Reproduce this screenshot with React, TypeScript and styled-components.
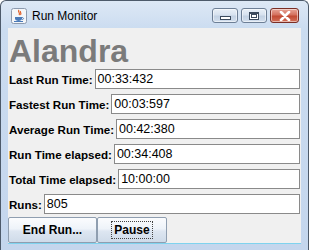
import React from "react";
import styled, { createGlobalStyle } from "styled-components";

const Global = createGlobalStyle`
  html, body { margin: 0; padding: 0; background: #ffffff; }
  * { box-sizing: border-box; }
`;

const Window = styled.div`
  width: 309px;
  height: 250px;
  border: 1px solid #4d5a6a;
  border-bottom: none;
  border-radius: 6px 6px 0 0;
  background: linear-gradient(180deg, #dde8f5 0px, #cbdcf0 28px, #c4d6ed 100%);
  display: flex;
  flex-direction: column;
  overflow: hidden;
  font-family: "Liberation Sans", Arial, sans-serif;
`;

const TitleBar = styled.div`
  height: 27px;
  display: flex;
  align-items: center;
  padding: 0 9px 0 10px;
  flex-shrink: 0;
`;

const AppIcon = styled.svg`
  width: 16px;
  height: 16px;
  margin-right: 5px;
  margin-top: 2px;
`;

const TitleText = styled.span`
  font-size: 12px;
  color: #000;
  flex: 1;
  margin-top: 2px;
  font-family: "Liberation Sans", Arial, sans-serif;
`;

const CaptionButtons = styled.div`
  display: flex;
  gap: 3px;
  align-items: center;
  margin-top: 2px;
`;

const CaptionBtn = styled.div<{ $close?: boolean }>`
  width: ${(p) => (p.$close ? "29px" : "26px")};
  height: 15px;
  border: 1px solid ${(p) => (p.$close ? "#7a2e25" : "#6d7f96")};
  border-radius: 3px;
  background: ${(p) =>
    p.$close
      ? "linear-gradient(180deg, #e8a598 0%, #d4715e 45%, #c24a33 55%, #d2705a 100%)"
      : "linear-gradient(180deg, #e9f0f8 0%, #d7e2ef 45%, #c3d2e4 55%, #d3dfee 100%)"};
  display: flex;
  align-items: center;
  justify-content: center;
  box-shadow: inset 0 0 0 1px rgba(255, 255, 255, 0.5);
`;

const MinGlyph = styled.div`
  width: 11px;
  height: 4px;
  border: 1px solid #3b4a5d;
  background: #fff;
  margin-top: 4px;
`;

const MaxGlyph = styled.div`
  width: 10px;
  height: 8px;
  border: 1px solid #3b4a5d;
  border-top-width: 2px;
  background: #fff;
  display: flex;
  align-items: center;
  justify-content: center;
  &::after {
    content: "";
    width: 4px;
    height: 2px;
    border: 1px solid #3b4a5d;
  }
`;

const Content = styled.div`
  margin: 0 7px 7px 7px;
  flex: 1;
  background: #f0f0f0;
  display: flex;
  flex-direction: column;
  padding: 0 1px 0 1px;
  box-shadow: 0 1px 0 #7fd3ee;
`;

const Heading = styled.div`
  height: 41px;
  padding-top: 5px;
  font-size: 32px;
  line-height: 36px;
  font-weight: bold;
  color: #7b7b7b;
  font-family: "Liberation Sans", Arial, sans-serif;
`;

const Rows = styled.div`
  display: flex;
  flex-direction: column;
  gap: 5px;
`;

const Row = styled.div`
  display: flex;
  align-items: center;
  height: 20px;
`;

const Label = styled.span`
  font-size: 11.6px;
  font-weight: bold;
  color: #000;
  white-space: nowrap;
  margin-right: 2px;
`;

const Field = styled.div`
  flex: 1;
  height: 20px;
  background: #fff;
  border: 1px solid #8a8a8a;
  font-size: 12.5px;
  line-height: 18px;
  padding-left: 2px;
  color: #000;
`;

const ButtonBar = styled.div`
  display: flex;
  margin-top: auto;
  margin-left: -1px;
  height: 26px;
`;

const Button = styled.div<{ $w: number; $focus?: boolean }>`
  width: ${(p) => p.$w}px;
  height: 26px;
  border: 1px solid #8f9eb0;
  border-radius: 2px;
  background: linear-gradient(180deg, #fbfcfe 0%, #eef3f9 45%, #dde6f1 55%, #cfdbe9 100%);
  display: flex;
  align-items: center;
  justify-content: center;
  font-size: 12px;
  font-weight: bold;
  color: #000;
  & > span {
    padding: 1px 2px;
    border: 1px dotted ${(p) => (p.$focus ? "#444" : "transparent")};
  }
`;

export default function App() {
  const rows: [string, string][] = [
    ["Last Run Time:", "00:33:432"],
    ["Fastest Run Time:", "00:03:597"],
    ["Average Run Time:", "00:42:380"],
    ["Run Time elapsed:", "00:34:408"],
    ["Total Time elapsed:", "10:00:00"],
    ["Runs:", "805"],
  ];
  return (
    <>
      <Global />
      <Window>
        <TitleBar>
          <AppIcon viewBox="0 0 16 16">
            <rect x="0.5" y="0.5" width="15" height="15" rx="2" fill="#f4f6f9" stroke="#8c9aae" />
            <path d="M8 2 C6 4 10 5 8 7 M9.5 3 C8.5 4.5 11 5 9.5 7" stroke="#e2612a" strokeWidth="1.2" fill="none" />
            <path d="M4 9 h7 v1.5 c0 1.5 -1.5 2.5 -3.5 2.5 s-3.5 -1 -3.5 -2.5 z" fill="#4a7ab8" />
            <path d="M11 9.5 c2 0 2 2 0 2" stroke="#4a7ab8" strokeWidth="1" fill="none" />
            <path d="M3 13.5 h9" stroke="#4a7ab8" strokeWidth="1" />
          </AppIcon>
          <TitleText>Run Monitor</TitleText>
          <CaptionButtons>
            <CaptionBtn>
              <MinGlyph />
            </CaptionBtn>
            <CaptionBtn>
              <MaxGlyph />
            </CaptionBtn>
            <CaptionBtn $close>
              <svg width="12" height="10" viewBox="0 0 12 10">
                <path d="M2 1 L10 9 M10 1 L2 9" stroke="#fff" strokeWidth="2.6" strokeLinecap="round" />
              </svg>
            </CaptionBtn>
          </CaptionButtons>
        </TitleBar>
        <Content>
          <Heading>Alandra</Heading>
          <Rows>
            {rows.map(([l, v]) => (
              <Row key={l}>
                <Label>{l}</Label>
                <Field>{v}</Field>
              </Row>
            ))}
          </Rows>
          <ButtonBar>
            <Button $w={89}>
              <span>End Run...</span>
            </Button>
            <Button $w={70} $focus>
              <span>Pause</span>
            </Button>
          </ButtonBar>
        </Content>
      </Window>
    </>
  );
}
